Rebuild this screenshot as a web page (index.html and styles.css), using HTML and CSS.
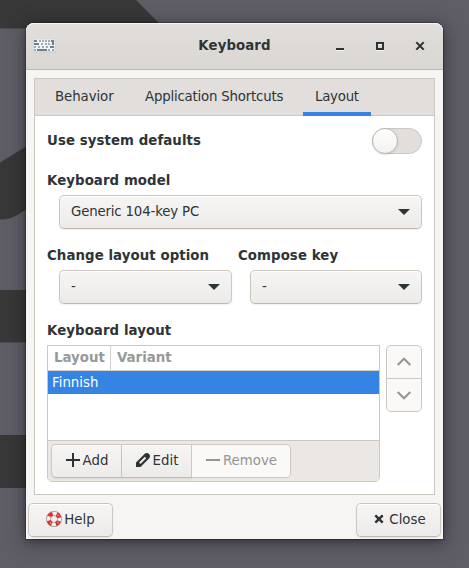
FILE: index.html
```html
<!DOCTYPE html>
<html lang="en">
<head>
<meta charset="utf-8">
<title>Keyboard</title>
<link rel="stylesheet" href="styles.css">
</head>
<body>
<svg class="wallpaper" width="469" height="568" viewBox="0 0 469 568" aria-hidden="true">
  <g fill="#383838"><path d="M0 0h136l40 40v100H110V28.500H0z"/><path d="M0 162.500L27 146l20 0v55L27 209C16 216 10 220 0 219.500z"/><path d="M0 290h60v52.500H0zM0 435h60v53H0z"/></g>
</svg>
<div class="window">
  <header class="titlebar">
    <svg class="app-icon" width="24" height="18" viewBox="0 0 24 18">
      <rect x="1" y="2" width="22.500" height="13.500" rx="1.500" fill="#bdcbd3"/>
      <rect x="1.500" y="2" width="21.500" height="12.500" rx="1" fill="#edf3f6" stroke="#cfdce4" stroke-width="1"/>
      <path fill="#727f86" d="M2 3h3v2H2zM2 6h5v2H2zM19 3h3v5h-2V5h-1zM18 9h4v2h-4zM5 12h10v2H5z"/>
      <path fill="#a3abaf" d="M7 3h2v2H7zM10 3h2v2h-2zM13 3h2v2h-2zM16 3h2v2h-2zM9 6h2v2H9zM13 6h2v2h-2zM16 6h2v2h-2zM2 9h2v2H2zM6 9h2v2H6zM10 9h2v2h-2zM14 9h2v2h-2zM2 12h2v2H2zM16 12h2v2h-2zM20 12h2v2h-2z"/>
    </svg>
    <h1 class="title">Keyboard</h1>
    <div class="controls">
      <svg width="10" height="10" viewBox="0 0 10 10"><path d="M1 7h8v2H1z" fill="#2e3436"/><path d="M1 9h8v1H1z" fill="#fff" opacity=".7"/></svg>
      <svg width="10" height="10" viewBox="0 0 10 10"><path d="M2 3h6v6H2z" fill="none" stroke="#fff" stroke-width="2" opacity=".7"/><path d="M2 2h6v6H2z" fill="none" stroke="#2e3436" stroke-width="2"/></svg>
      <svg width="10" height="10" viewBox="0 0 10 10"><path d="M1.500 2.500l7 7m0-7l-7 7" stroke="#fff" stroke-width="2" opacity=".6"/><path d="M1.300 1.300l7.400 7.400m0-7.400l-7.400 7.400" stroke="#2e3436" stroke-width="2"/></svg>
    </div>
  </header>
  <main class="notebook">
    <nav class="tabs">
      <span class="tab behavior">Behavior</span><span class="tab shortcuts">Application Shortcuts</span><span class="tab layout active">Layout</span>
    </nav>
    <div class="page">
      <div class="row"><span class="label">Use system defaults</span><span class="switch"><i class="knob"></i></span></div>
      <section class="field">
        <span class="label">Keyboard model</span>
        <div class="button combo"><span>Generic 104-key PC</span><svg width="12" height="6" viewBox="0 0 12 6"><path d="M0 0h12L6 6z" fill="#2e3436"/></svg></div>
      </section>
      <div class="columns">
        <section class="field">
          <span class="label">Change layout option</span>
          <div class="button combo"><span>-</span><svg width="12" height="6" viewBox="0 0 12 6"><path d="M0 0h12L6 6z" fill="#2e3436"/></svg></div>
        </section>
        <section class="field">
          <span class="label">Compose key</span>
          <div class="button combo"><span>-</span><svg width="12" height="6" viewBox="0 0 12 6"><path d="M0 0h12L6 6z" fill="#2e3436"/></svg></div>
        </section>
      </div>
      <section class="field">
        <span class="label">Keyboard layout</span>
        <div class="list-area">
          <div class="list">
            <div class="list-head"><span class="col-layout">Layout</span><span class="col-variant">Variant</span></div>
            <div class="list-row">Finnish</div>
            <div class="list-space"></div>
            <div class="toolbar">
              <div class="button first"><svg width="16" height="16" viewBox="0 0 16 16"><path d="M7 1h2v6h6v2H9v6H7V9H1V7h6z" fill="#2e3436"/></svg>Add</div>
              <div class="button middle"><svg width="16" height="16" viewBox="0 0 16 16"><path d="M1 15V10.500L9.500 2a3 3 0 0 1 4.500 0a3 3 0 0 1 0 4.500L5.500 15z" fill="#2e3436"/><path d="M4.800 11.200l5.700-5.700" stroke="#eeedec" stroke-width="2"/></svg>Edit</div>
              <div class="button last disabled"><svg width="16" height="16" viewBox="0 0 16 16"><path d="M1 7h14v2H1z" fill="#929595"/></svg>Remove</div>
            </div>
          </div>
          <div class="mover">
            <div class="move"><svg width="16" height="16" viewBox="0 0 16 16"><path d="M1.700 11L8 4.700l6.300 6.300" fill="none" stroke="#929595" stroke-width="2"/></svg></div>
            <div class="move"><svg width="16" height="16" viewBox="0 0 16 16"><path d="M1.700 5L8 11.300 14.300 5" fill="none" stroke="#929595" stroke-width="2"/></svg></div>
          </div>
        </div>
      </section>
    </div>
  </main>
  <footer class="actions">
    <div class="button help"><svg width="16" height="16" viewBox="0 0 16 16"><circle cx="8" cy="8" r="5.500" fill="none" stroke="#9c9c98" stroke-width="5"/><circle cx="8" cy="8" r="5.500" fill="none" stroke="#f2f2f0" stroke-width="3.400"/><circle cx="8" cy="8" r="5.500" fill="none" stroke="#df3030" stroke-width="4.200" stroke-dasharray="4.400 4.240" stroke-dashoffset="-2.120"/><path d="M3 5l2 1M11 5l2-1M5 11l-1 2M11 11l2 1" stroke="#ff8a85" stroke-width="1"/></svg>Help</div>
    <div class="button close"><svg width="16" height="16" viewBox="0 0 16 16"><path d="M4.300 4.300l7.400 7.400m0-7.400l-7.400 7.400" stroke="#2e3436" stroke-width="2.500"/></svg>Close</div>
  </footer>
</div>
</body>
</html>
```
FILE: styles.css
```css
* { box-sizing: border-box; }
body {
  margin: 0;
  width: 469px;
  height: 568px;
  padding: 23px 26px;
  overflow: hidden;
  background: #5f5d66;
  color: #2e3436;
  font: 13.333px/17px "DejaVu Sans", sans-serif;
}
svg { display: block; flex: none; }
.wallpaper { position: absolute; left: 0; top: 0; }
.window {
  position: relative;
  width: 417px;
  height: 516px;
  background: #f6f5f4;
  border-radius: 8px 8px 0 0;
  box-shadow: 0 3px 20px 3px rgba(0, 0, 0, .27), 0 2px 6px rgba(0, 0, 0, .3), 0 0 0 1px rgba(0, 0, 0, .22);
}
.titlebar {
  display: grid;
  grid-template-columns: 110px 1fr 110px;
  align-items: center;
  height: 47px;
  padding: 0 6px;
  border-bottom: 1px solid #bfb8b1;
  border-radius: 8px 8px 0 0;
  background: linear-gradient(#e1dedb, #dad6d2);
  box-shadow: inset 0 1px #f8f7f6;
}
.title { margin: 0; padding-bottom: 2px; font-size: 13.333px; line-height: 17px; letter-spacing: .08px; text-align: center; }
.controls { display: flex; justify-content: space-between; width: 90px; margin-left: 8px; }
.notebook { margin: 8px 8px 0; border: 1px solid #cdc7c2; background: #fff; }
.tabs { display: flex; gap: 8px; height: 37px; padding-left: 8px; background: #e1dedb; border-bottom: 1px solid #cdc7c2; }
.tab { height: 37px; padding: 9px 0 0 12px; white-space: nowrap; }
.behavior { width: 82px; letter-spacing: -.08px; }
.shortcuts { width: 162px; letter-spacing: -.2px; }
.layout { width: 68px; letter-spacing: -.25px; }
.active { box-shadow: inset 0 -4px #3584e4; }
.page { padding: 12px; display: flex; flex-direction: column; gap: 18px; }
.row { display: flex; justify-content: space-between; align-items: center; height: 26px; }
.label { display: block; font-weight: bold; letter-spacing: .07px; white-space: nowrap; }
.row .label { padding-bottom: 2px; }
.switch { display: block; width: 50px; height: 26px; border: 1px solid #cdc7c2; border-radius: 13px; background: #e1dedb; }
.knob { display: block; width: 26px; height: 26px; margin: -1px; border: 1px solid #bfb8b1; border-radius: 50%; background: linear-gradient(#fff, #f2f1f0); box-shadow: 0 1px 2px rgba(0, 0, 0, .1); }
.columns { display: grid; grid-template-columns: 185px 184px; gap: 6px; }
.button {
  display: flex;
  align-items: center;
  justify-content: center;
  height: 34px;
  padding-bottom: 2px;
  border: 1px solid #cdc7c2;
  border-bottom-color: #bfb8b1;
  border-radius: 5px;
  background: linear-gradient(#f6f5f4, #edebe9);
  box-shadow: inset 0 1px #fff, 0 1px 2px rgba(0, 0, 0, .07);
}
.combo { margin: 6px 0 0 12px; padding: 0 11px; justify-content: space-between; letter-spacing: -.17px; }
.combo span { padding-bottom: 2px; }
.list-area { display: flex; gap: 6px; margin-top: 6px; align-items: flex-start; }
.list { width: 333px; height: 137px; display: flex; flex-direction: column; border: 1px solid #cdc7c2; border-radius: 0 0 5px 5px; }
.list-head { display: flex; height: 25px; border-bottom: 1px solid #d5d0cc; font-weight: bold; color: #969999; line-height: 24px; }
.col-layout { width: 63px; padding-left: 6px; border-right: 1px solid #d5d0cc; }
.col-variant { padding-left: 6px; }
.list-row { height: 23px; padding-left: 4px; background: #3584e4; color: #fff; line-height: 23px; }
.list-space { flex: 1; }
.toolbar { display: flex; height: 41px; padding: 3px; border-top: 1px solid #cdc7c2; background: #ebe7e4; border-radius: 0 0 4px 4px; }
.first { width: 71px; border-radius: 5px 0 0 5px; }
.middle { width: 70px; border-left: 0; border-radius: 0; }
.last { width: 99px; border-left: 0; border-radius: 0 5px 5px 0; }
.toolbar .button, .help { gap: 2px; }
.disabled { background: #faf9f8; color: #929595; border-color: #cdc7c2; box-shadow: none; }
.mover { width: 36px; height: 67px; border: 1px solid #cdc7c2; border-radius: 5px; background: #faf9f8; }
.move { display: flex; height: 32px; align-items: center; justify-content: center; }
.move + .move { height: 33px; border-top: 1px solid #cdc7c2; }
.actions { display: flex; justify-content: space-between; padding: 8px 2px 2px; }
.help, .close { width: 85px; }
.close { gap: 2px; }
```
